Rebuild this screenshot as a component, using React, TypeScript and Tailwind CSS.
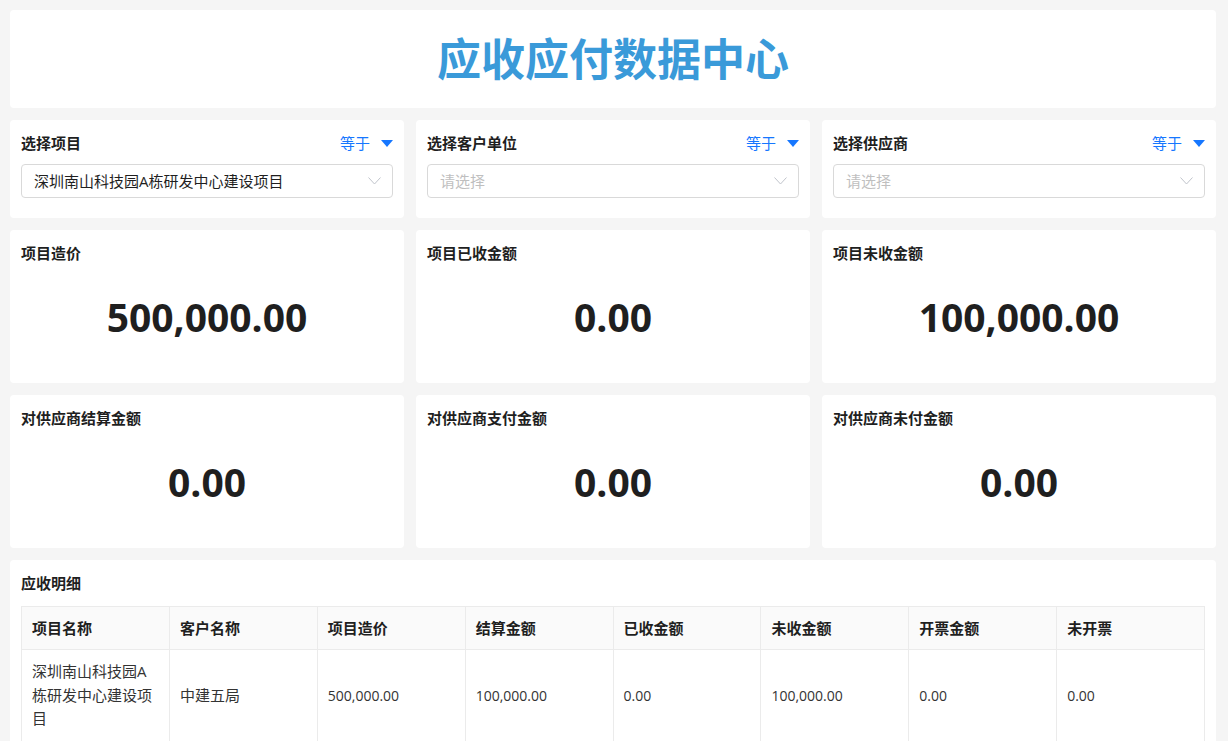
import React from "react";

const FONT = "[font-family:'Open_Sans','Noto_Sans_CJK_SC',sans-serif]";

function Caret() {
  return (
    <svg width="12" height="7" viewBox="0 0 12 7" className="ml-[11px]">
      <path d="M0 0 H12 L6 7 Z" fill="#1677ff" />
    </svg>
  );
}

function Chevron() {
  return (
    <svg width="13" height="8" viewBox="0 0 13 8">
      <polyline points="0.5,0.5 6.5,7 12.5,0.5" fill="none" stroke="#c0c4cc" strokeWidth="1" />
    </svg>
  );
}

function FilterCard({ label, value }: { label: string; value?: string }) {
  return (
    <div className="bg-white rounded-[4px] h-[98px] px-[11px] pt-[14px]">
      <div className="flex items-center justify-between h-[18px]">
        <span className="text-[15px] font-bold text-[#1f1f1f]">{label}</span>
        <span className="flex items-center text-[15px] text-[#1677ff]">
          等于
          <Caret />
        </span>
      </div>
      <div className="mt-[12px] h-[34px] border border-[#d9d9d9] rounded-[4px] flex items-center justify-between pl-[12px] pr-[11px]">
        {value ? (
          <span className="text-[15px] text-[#1f1f1f]">{value}</span>
        ) : (
          <span className="text-[15px] text-[#bfbfbf]">请选择</span>
        )}
        <Chevron />
      </div>
    </div>
  );
}

function StatCard({ label, value }: { label: string; value: string }) {
  return (
    <div className="bg-white rounded-[4px] h-[153px] px-[11px] pt-[14px]">
      <div className="h-[18px] flex items-center">
        <span className="text-[15px] font-bold text-[#1f1f1f]">{label}</span>
      </div>
      <div className="mt-[29px] h-[50px] flex items-center justify-center">
        <span className="text-[39px] font-bold text-[#1f1f1f] leading-none [font-family:'Open_Sans',sans-serif]">
          {value}
        </span>
      </div>
    </div>
  );
}

const headers = ["项目名称", "客户名称", "项目造价", "结算金额", "已收金额", "未收金额", "开票金额", "未开票"];

export default function App() {
  return (
    <div className={`min-h-screen bg-[#f5f5f5] pl-[10px] pr-[12px] pt-[10px] pb-[10px] flex flex-col gap-3 ${FONT}`}>
      <div className="bg-white rounded-[4px] h-[98px] flex items-center justify-center">
        <h1 className="text-[44px] font-bold text-[#3a9ad9] leading-none">应收应付数据中心</h1>
      </div>

      <div className="grid grid-cols-3 gap-3">
        <FilterCard label="选择项目" value="深圳南山科技园A栋研发中心建设项目" />
        <FilterCard label="选择客户单位" />
        <FilterCard label="选择供应商" />
      </div>

      <div className="grid grid-cols-3 gap-3">
        <StatCard label="项目造价" value="500,000.00" />
        <StatCard label="项目已收金额" value="0.00" />
        <StatCard label="项目未收金额" value="100,000.00" />
      </div>

      <div className="grid grid-cols-3 gap-3">
        <StatCard label="对供应商结算金额" value="0.00" />
        <StatCard label="对供应商支付金额" value="0.00" />
        <StatCard label="对供应商未付金额" value="0.00" />
      </div>

      <div className="bg-white rounded-[4px] px-[11px] pt-[14px] pb-[11px]">
        <div className="h-[18px] flex items-center">
          <span className="text-[15px] font-bold text-[#1f1f1f]">应收明细</span>
        </div>
        <table className="mt-[14px] w-full table-fixed border-collapse border border-[#ebebeb]">
          <thead>
            <tr className="bg-[#fafafa]">
              {headers.map((h) => (
                <th
                  key={h}
                  className="text-left font-bold text-[15px] text-[#1f1f1f] px-[10px] py-[10px] leading-[22px] border border-[#ebebeb]"
                >
                  {h}
                </th>
              ))}
            </tr>
          </thead>
          <tbody>
            <tr>
              <td className="px-[10px] py-[10px] text-[15px] leading-[23.5px] text-[#333] border border-[#ebebeb] align-middle">
                深圳南山科技园A栋研发中心建设项目
              </td>
              <td className="px-[10px] py-[10px] text-[15px] leading-[23.5px] text-[#333] border border-[#ebebeb]">
                中建五局
              </td>
              {["500,000.00", "100,000.00", "0.00", "100,000.00", "0.00", "0.00"].map((v, i) => (
                <td
                  key={i}
                  className="px-[10px] py-[10px] text-[14px] leading-[23.5px] text-[#333] border border-[#ebebeb]"
                >
                  {v}
                </td>
              ))}
            </tr>
          </tbody>
        </table>
      </div>
    </div>
  );
}
